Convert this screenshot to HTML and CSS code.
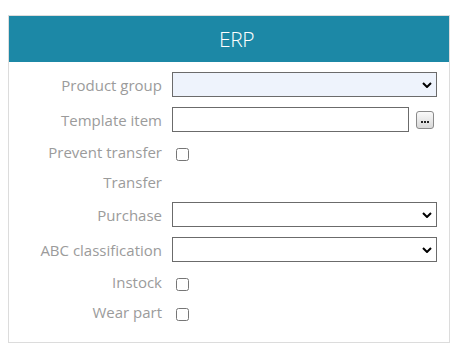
FILE: index.html
```html
<!DOCTYPE html>
<html lang="en">
<head>
    <meta charset="UTF-8">
    <meta name="viewport" content="width=device-width, initial-scale=1.0">
    <title>ERP</title>
    <link rel="stylesheet" href="styles.css">
</head>
<body>
    <div class="panel">
        <div class="panel-header">ERP</div>

        <!-- ERP fields -->
        <div class="form-grid">
            <label class="field-label" for="productGroup">Product group</label>
            <div class="field-control">
                <select id="productGroup" class="field-select required"><option></option></select>
            </div>

            <label class="field-label" for="templateItem">Template item</label>
            <div class="field-control">
                <input type="text" id="templateItem" class="field-text">
                <button type="button" class="lookup-btn"><span class="dot"></span><span class="dot"></span><span class="dot"></span></button>
            </div>

            <label class="field-label" for="preventTransfer">Prevent transfer</label>
            <div class="field-control">
                <input type="checkbox" id="preventTransfer" class="field-check">
            </div>

            <span class="field-label">Transfer</span>
            <div class="field-control"></div>

            <label class="field-label" for="purchase">Purchase</label>
            <div class="field-control">
                <select id="purchase" class="field-select"><option></option></select>
            </div>

            <label class="field-label" for="abcClass">ABC classification</label>
            <div class="field-control">
                <select id="abcClass" class="field-select"><option></option></select>
            </div>

            <label class="field-label" for="instock">Instock</label>
            <div class="field-control">
                <input type="checkbox" id="instock" class="field-check">
            </div>

            <label class="field-label" for="wearPart">Wear part</label>
            <div class="field-control">
                <input type="checkbox" id="wearPart" class="field-check">
            </div>
        </div>
    </div>
</body>
</html>
```

FILE: styles.css
```css
body {
    font-family: 'Open Sans', 'Noto Sans', sans-serif;
    background-color: #fff;
    margin: 15px 8px 8px 8px;
}

.panel {
    width: 442px;
    box-sizing: border-box;
    border: 1px solid #dcdcdc;
}

.panel-header {
    height: 46px;
    background-color: #1c88a6;
    color: #fff;
    font-size: 21px;
    font-weight: 300;
    letter-spacing: -0.5px;
    display: flex;
    align-items: center;
    justify-content: center;
    padding-left: 15px;
}

.form-grid {
    display: grid;
    grid-template-columns: 153px 1fr;
    grid-template-rows: 25px 25px 20px 20px 25px 25px 20px 20px;
    column-gap: 10px;
    row-gap: 10px;
    padding: 10px 12px 20px 0;
}

.field-label {
    font-size: 15px;
    color: #9b9b9b;
    display: flex;
    align-items: center;
    justify-content: flex-end;
    white-space: nowrap;
}

.field-control {
    display: flex;
    align-items: center;
    gap: 7px;
}

.field-select {
    appearance: none;
    -webkit-appearance: none;
    width: 100%;
    height: 25px;
    box-sizing: border-box;
    border: 1px solid #6b6b6b;
    border-radius: 0;
    background-color: #fff;
    background-image: url("data:image/svg+xml,%3Csvg xmlns='http://www.w3.org/2000/svg' width='10' height='6' viewBox='0 0 10 6'%3E%3Cpath d='M1 1l4 4 4-4' fill='none' stroke='%23000' stroke-width='2'/%3E%3C/svg%3E");
    background-repeat: no-repeat;
    background-position: right 4px center;
    margin: 0;
}

.field-select.required {
    background-color: #eef3fc;
}

.field-text {
    width: 237px;
    height: 25px;
    box-sizing: border-box;
    border: 1px solid #6b6b6b;
    margin: 0;
    padding: 2px 4px;
}

.lookup-btn {
    width: 18px;
    height: 18px;
    padding: 4px 0 0 0;
    border: 1px solid #8a8a8a;
    border-radius: 3px;
    background: linear-gradient(#fafafa, #d8d8d8);
    display: flex;
    align-items: center;
    justify-content: center;
    gap: 1px;
    cursor: pointer;
}

.dot {
    width: 2px;
    height: 2px;
    background-color: #222;
}

.field-check {
    width: 13px;
    height: 13px;
    margin: 4px 0 0 4px;
}
```
